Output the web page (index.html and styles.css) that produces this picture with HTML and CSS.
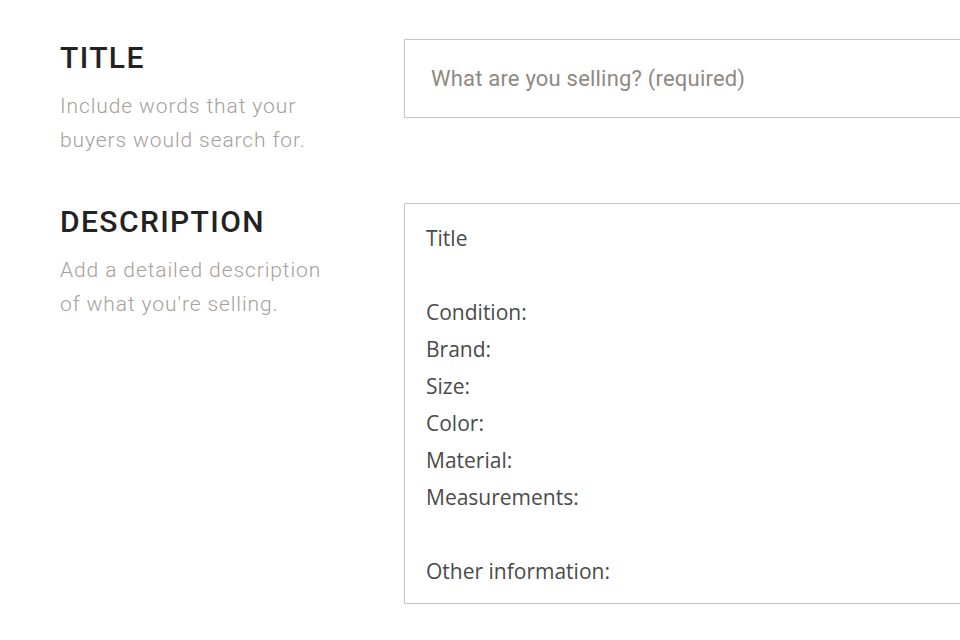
FILE: index.html
```html
<!DOCTYPE html>
<html lang="en">
<head>
  <meta charset="UTF-8">
  <meta name="viewport" content="width=device-width, initial-scale=1.0">
  <title>List an item</title>
  <link rel="stylesheet" href="styles.css">
</head>
<body>
<div class="listing-form">
  <div class="form-row">
    <div class="field-info">
      <h2 class="field-title">TITLE</h2>
      <p class="field-hint">Include words that your buyers would search for.</p>
    </div>
    <div class="field-control">
      <input class="text-input" type="text" placeholder="What are you selling? (required)">
    </div>
  </div>

  <div class="form-row">
    <div class="field-info">
      <h2 class="field-title">DESCRIPTION</h2>
      <p class="field-hint">Add a detailed description of what you're selling.</p>
    </div>
    <div class="field-control">
      <div class="text-area">
        <div class="line">Title</div>
        <div class="line">&nbsp;</div>
        <div class="line">Condition:</div>
        <div class="line">Brand:</div>
        <div class="line">Size:</div>
        <div class="line">Color:</div>
        <div class="line">Material:</div>
        <div class="line">Measurements:</div>
        <div class="line">&nbsp;</div>
        <div class="line">Other information:</div>
      </div>
    </div>
  </div>
</div>
</body>
</html>
```

FILE: styles.css
```css
* {
  margin: 0;
  padding: 0;
  box-sizing: border-box;
}

body {
  font-family: Roboto, 'Liberation Sans', sans-serif;
  background: #fff;
  color: #222;
  overflow: hidden;
}

.listing-form {
  padding: 39px 0 0 60px;
  width: 1200px;
}

.form-row {
  display: flex;
  margin-bottom: 46px;
}

.field-info {
  width: 344px;
  flex-shrink: 0;
  padding-top: 1px;
}

.field-title {
  font-size: 30px;
  font-weight: 500;
  line-height: 36px;
  color: #222;
  letter-spacing: 1.4px;
}

.field-hint {
  margin-top: 13px;
  width: 272px;
  font-size: 21px;
  font-weight: 300;
  line-height: 34px;
  letter-spacing: 0.9px;
  color: #a5a19d;
}

.field-control {
  flex: 1;
}

.text-input {
  display: block;
  width: 100%;
  height: 79px;
  padding: 0 26px;
  border: 1px solid #c9c5c1;
  box-shadow: 0 0 1px rgba(0, 0, 0, 0.18);
  border-radius: 1px;
  font-family: Roboto, 'Liberation Sans', sans-serif;
  font-size: 22px;
  letter-spacing: 0.2px;
  color: #333;
  outline: none;
}

.text-input::placeholder {
  color: #8e8984;
}

.text-area {
  height: 401px;
  padding: 16px 21px;
  border: 1px solid #c9c5c1;
  box-shadow: 0 0 1px rgba(0, 0, 0, 0.18);
  border-radius: 1px;
  font-family: 'Open Sans', 'Liberation Sans', sans-serif;
  font-size: 21px;
  line-height: 37px;
  color: #4a4a4a;
}
```
